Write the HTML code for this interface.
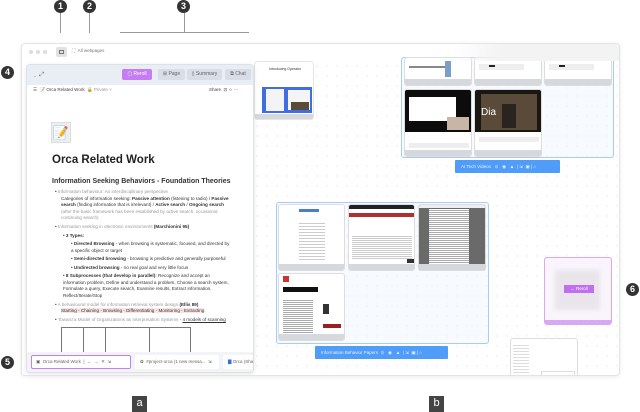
<!DOCTYPE html>
<html><head><meta charset="utf-8"><style>
*{margin:0;padding:0;box-sizing:border-box}
body{width:640px;height:412px;background:#fff;position:relative;overflow:hidden;font-family:"Liberation Sans",sans-serif;color:#333}
.a{position:absolute}
.num{position:absolute;width:13px;height:13px;border-radius:50%;background:#333;color:#fff;font-size:9px;font-weight:bold;text-align:center;line-height:13px}
.win{left:21px;top:43px;width:599px;height:333px;border:1px solid #e4e4e4;border-radius:4px;background:#fff;box-shadow:0 1px 4px rgba(0,0,0,.08);overflow:hidden}
.canvas{left:0;top:17px;width:599px;height:316px;background-color:#fff;background-image:radial-gradient(#d6d6d6 0.5px,transparent 0.7px);background-size:10px 10px}
.card{position:absolute;background:#fff;border:1px solid #ddd;border-radius:3px;overflow:hidden}
.card .ft{position:absolute;left:0;right:0;bottom:0;height:6px;background:#d5d8dd}
.grp{position:absolute;border:1px solid #a9cbf7;border-radius:3px;background:rgba(240,246,255,.5)}
.tb{position:absolute;background:#4f9cf9;color:#e8f1ff;font-size:4.5px;border-radius:1px;line-height:13px;padding-left:6px;white-space:nowrap}
.btn{position:absolute;top:4px;height:11px;border-radius:2px;background:#d8dde6;font-size:5px;color:#666;line-height:11px;text-align:center}
.doc{font-size:4.6px;line-height:8.6px;color:#333}
.doc div{line-height:6.5px;margin-bottom:2.1px}
.g{color:#999}
.hl{background:#fbe3e3}
</style></head><body>
<div class="num" style="left:54px;top:0">1</div>
<div class="num" style="left:83px;top:0">2</div>
<div class="num" style="left:177px;top:0">3</div>
<div class="a" style="left:60px;top:13px;width:1px;height:20px;background:#999"></div>
<div class="a" style="left:89px;top:13px;width:1px;height:20px;background:#999"></div>
<div class="a" style="left:184px;top:13px;width:1px;height:20px;background:#999"></div>
<div class="a" style="left:120px;top:32px;width:129px;height:1px;background:#999"></div>
<div class="num" style="left:1px;top:66px">4</div>
<div class="num" style="left:1px;top:356px">5</div>
<div class="num" style="left:626px;top:283px">6</div>
<div class="a" style="left:132px;top:396px;width:15px;height:16px;background:#444;color:#fff;font-size:11px;text-align:center;line-height:15px">a</div>
<div class="a" style="left:429px;top:396px;width:15px;height:16px;background:#444;color:#fff;font-size:11px;text-align:center;line-height:15px">b</div>

<div class="a win">
 <div class="a" style="left:7px;top:6px;width:4px;height:4px;border-radius:50%;background:#ddd"></div>
 <div class="a" style="left:14px;top:6px;width:4px;height:4px;border-radius:50%;background:#ddd"></div>
 <div class="a" style="left:21px;top:6px;width:4px;height:4px;border-radius:50%;background:#ddd"></div>
 <div class="a" style="left:34px;top:3px;width:11px;height:10px;border-radius:2px;background:#e2e2e2"></div>
 <div class="a" style="left:37px;top:6px;width:5px;height:4px;border:1px solid #777"></div>
 <div class="a" style="left:50px;top:4px;font-size:4.5px;color:#777">⛶ &nbsp;All webpages</div>
 <div class="a" style="left:0;top:17px;width:599px;height:1px;background:#e6e6e6"></div>
 <div class="a canvas">
  <div class="card" style="left:232px;top:0;width:60px;height:59px;border-color:#e6e6e6">
   <div class="a" style="left:14px;top:5px;font-size:3.5px;color:#333">Introducing Operator</div>
   <div class="a" style="left:7px;top:25px;width:50px;height:26px;background:#3e6ee0"></div>
   <div class="a" style="left:11px;top:27px;width:18px;height:22px;background:#f4f4f4"></div>
   <div class="a" style="left:33px;top:28px;width:22px;height:20px;background:#f4f4f4"></div>
   <div class="a" style="left:36px;top:40px;width:18px;height:8px;background:#5a4a3a"></div>
   <div class="ft" style="height:5px"></div>
  </div>
  <div class="grp" style="left:379px;top:-4px;width:213px;height:101px"></div>
  <div class="card" style="left:382px;top:-4px;width:68px;height:29px"><div class="a" style="left:4px;top:8px;width:40px;height:2px;background:#888"></div><div class="a" style="left:40px;top:3px;width:6px;height:16px;background:#7ba0c8"></div><div class="ft"></div></div>
  <div class="card" style="left:452px;top:-4px;width:68px;height:29px"><div class="a" style="left:4px;top:6px;width:45px;height:6px;background:#eee"></div><div class="a" style="left:14px;top:7px;width:6px;height:2px;background:#222"></div><div class="ft"></div></div>
  <div class="card" style="left:522px;top:-4px;width:68px;height:29px"><div class="a" style="left:4px;top:6px;width:45px;height:6px;background:#eee"></div><div class="a" style="left:14px;top:7px;width:6px;height:2px;background:#222"></div><div class="ft"></div></div>
  <div class="card" style="left:382px;top:28px;width:68px;height:68px"><div class="a" style="left:0;top:0;width:68px;height:42px;background:#0c0c0c"></div><div class="a" style="left:4px;top:7px;width:47px;height:24px;background:#fff"></div><div class="a" style="left:42px;top:27px;width:22px;height:13px;background:#c8b5a5"></div><div class="a" style="left:4px;top:53px;width:60px;height:5px;background:#eee"></div><div class="ft"></div></div>
  <div class="card" style="left:452px;top:28px;width:68px;height:68px"><div class="a" style="left:0;top:0;width:68px;height:42px;background:#1a1612"></div><div class="a" style="left:6px;top:4px;width:56px;height:36px;background:#5a4a3a"></div><div class="a" style="left:27px;top:14px;width:14px;height:24px;background:#2a2420"></div><div class="a" style="left:6px;top:17px;font-size:10px;color:#fff">Dia</div><div class="a" style="left:4px;top:47px;width:60px;height:5px;background:#eee"></div><div class="ft"></div></div>
  <div class="tb" style="left:433px;top:99px;width:105px;height:13px">AI Tech Videos &nbsp; ⊙ &nbsp; ◉ &nbsp; ▲ &nbsp;| ⇲ &nbsp;▣ | ⌂</div>
  <div class="grp" style="left:254px;top:141px;width:213px;height:142px"></div>
  <div class="card" style="left:256px;top:143px;width:67px;height:67px"><div class="a" style="left:20px;top:4px;width:20px;height:3px;background:#4a7fc0"></div><div class="a" style="left:20px;top:16px;width:26px;height:40px;background:repeating-linear-gradient(#fff 0 2px,#ccc 2px 3px)"></div><div class="ft"></div></div>
  <div class="card" style="left:326px;top:143px;width:67px;height:67px"><div class="a" style="left:0;top:0;width:67px;height:4px;background:#222"></div><div class="a" style="left:0;top:8px;width:67px;height:4px;background:#b03030"></div><div class="a" style="left:3px;top:30px;width:60px;height:24px;background:repeating-linear-gradient(#fff 0 1px,#ccc 1px 2px)"></div><div class="a" style="left:58px;top:54px;width:7px;height:4px;background:#333"></div><div class="ft"></div></div>
  <div class="card" style="left:396px;top:143px;width:68px;height:67px;background:#6a6a6a"><div class="a" style="left:0;top:0;width:68px;height:3px;background:#eee"></div><div class="a" style="left:10px;top:4px;width:40px;height:57px;background:repeating-linear-gradient(#fff 0 1px,#aaa 1px 2px)"></div><div class="ft"></div></div>
  <div class="card" style="left:256px;top:212px;width:67px;height:68px"><div class="a" style="left:4px;top:2px;width:6px;height:6px;background:#c33"></div><div class="a" style="left:4px;top:13px;width:35px;height:5px;background:#111"></div><div class="a" style="left:4px;top:25px;width:30px;height:35px;background:repeating-linear-gradient(#fff 0 1px,#aaa 1px 2px)"></div><div class="a" style="left:44px;top:30px;width:6px;height:10px;background:#333"></div><div class="a" style="left:44px;top:50px;width:18px;height:4px;background:#9a2020"></div><div class="ft"></div></div>
  <div class="tb" style="left:293px;top:285px;width:133px;height:13px">Information Behavior Papers &nbsp;⊙ &nbsp; ◉ &nbsp; ▲ &nbsp;| ⇲ &nbsp;▣ | ⌂</div>
  <div class="card" style="left:522px;top:196px;width:68px;height:68px;border-color:#d9a8f5;background:#faf5fd"><div class="a" style="left:10px;top:12px;width:45px;height:40px;background:rgba(200,200,200,.35);filter:blur(2px)"></div><div class="a" style="left:19px;top:27px;width:30px;height:8px;background:#bf6ff0;color:#fff;font-size:4.5px;line-height:8px;text-align:center">← Reroll</div><div class="ft" style="background:#d9a8f5;height:4px"></div></div>
  <div class="card" style="left:488px;top:277px;width:68px;height:45px"><div class="a" style="left:2px;top:4px;width:16px;height:40px;background:repeating-linear-gradient(#fff 0 2px,#ddd 2px 3px)"></div><div class="a" style="left:30px;top:32px;width:34px;height:12px;border:1px solid #ddd"></div></div>
 </div>

 <div class="a" style="left:4px;top:20px;width:228px;height:309px;border:1px solid #dde2ea;border-radius:4px;background:#fff;box-shadow:0 1px 4px rgba(0,0,0,.1);overflow:hidden">
  <div class="a" style="left:0;top:0;width:228px;height:20px;background:#e9edf4"></div>
  <div class="a" style="left:7px;top:7px;font-size:6px;color:#666">˯ &nbsp;⤢</div>
  <div class="btn" style="left:95px;width:30px;background:#c57cf5;color:#fff">▢ Reroll</div>
  <div class="btn" style="left:131px;width:27px">⊞ Page</div>
  <div class="btn" style="left:160px;width:35px">▯ Summary</div>
  <div class="btn" style="left:198px;width:26px">⧉ Chat</div>
  <div class="a" style="left:6px;top:22px;font-size:4.5px;color:#444;white-space:nowrap">☰ &nbsp;📝 Orca Related Work &nbsp;<span class="g">🔒 Private ˅</span></div>
  <div class="a" style="left:182px;top:22px;font-size:4.5px;color:#444">Share &nbsp;⊡ ☆ ⋯</div>
  <div class="a" style="left:24px;top:57px;width:20px;height:21px;background:#eee;border:1px solid #ddd;font-size:13px;line-height:19px;text-align:center">📝</div>
  <div class="a" style="left:25px;top:89px;font-size:11.5px;font-weight:bold;color:#222">Orca Related Work</div>
  <div class="a" style="left:25px;top:113px;font-size:7px;font-weight:bold;color:#333">Information Seeking Behaviors - Foundation Theories</div>
  <div class="a doc" style="left:28px;top:124px;width:176px">
   <div style="margin-bottom:0">• <span class="g">Information behaviour: An interdisciplinary perspective</span></div>
   <div style="padding-left:6px;line-height:6.6px">Categories of information seeking: <b>Passive attention</b> (listening to radio) / <b>Passive search</b> (finding information that is irrelevant) / <b>Active search</b> / <b>Ongoing search</b> <span class="g">(after the basic framework has been established by active search, occasional continuing search)</span></div>
   <div>• <span class="g">Information seeking in electronic environments</span> <b>(Marchionini 95)</b></div>
   <div style="padding-left:8px">• <b>3 Types:</b></div>
   <div style="padding-left:16px">• <b>Directed Browsing</b> - when browsing is systematic, focused, and directed by a specific object or target</div>
   <div style="padding-left:16px">• <b>Semi-directed browsing</b> - browsing is predictive and generally purposeful</div>
   <div style="padding-left:16px">• <b>Undirected browsing</b> - no real goal and very little focus</div>
   <div style="padding-left:8px">• <b>8 Subprocesses (that develop in parallel):</b> Recognize and accept an information problem, Define and understand a problem, Choose a search system, Formulate a query, Execute search, Examine results, Extract information, Reflect/Iterate/Stop</div>
   <div style="margin-bottom:0">• <span class="g">A behavioural model for information retrieval system design</span> <b>(Ellis 89)</b></div>
   <div style="padding-left:6px"><span class="hl">Starting - Chaining - Browsing - Differentiating - Monitoring - Extracting</span></div>
   <div>• <span class="g">Toward a Model of Organizations as Interpretation Systems</span> - <u>4 models of scanning</u></div>
  </div>
  <div class="a" style="left:34px;top:262px;width:130px;height:30px;border:1px solid #777;background:linear-gradient(90deg,transparent 21px,#777 21px 22px,transparent 22px 43px,#777 43px 44px,transparent 44px 87px,#777 87px 88px,transparent 88px)"></div>
  <div class="a" style="left:0;top:287px;width:228px;height:22px;background:#f3f4f7"></div>
  <div class="a" style="left:4px;top:290px;width:100px;height:14px;border:1px solid #c57cf5;border-radius:2px;background:#fff;font-size:4.5px;line-height:12px;padding-left:4px;color:#666;white-space:nowrap">▣ &nbsp;Orca Related Work &nbsp;| &nbsp;← &nbsp;→ &nbsp;✕ &nbsp;⇲</div>
  <div class="a" style="left:108px;top:290px;width:84px;height:14px;border-radius:2px;background:#fff;font-size:4.5px;line-height:14px;padding-left:5px;color:#666;white-space:nowrap">✿ &nbsp;#project-orca (1 new messa... &nbsp;⇲</div>
  <div class="a" style="left:196px;top:290px;width:40px;height:14px;border-radius:2px;background:#fff;font-size:4.5px;line-height:14px;padding-left:5px;color:#666;white-space:nowrap"><span style="color:#3a6fd8">▇</span> Orca (Sha</div>
 </div>
 <div class="a" style="left:430px;top:0;width:169px;height:17px;background:linear-gradient(90deg,rgba(245,245,245,0),#f3f3f3 30%,#f3f3f3)"></div>
</div>
</body></html>
